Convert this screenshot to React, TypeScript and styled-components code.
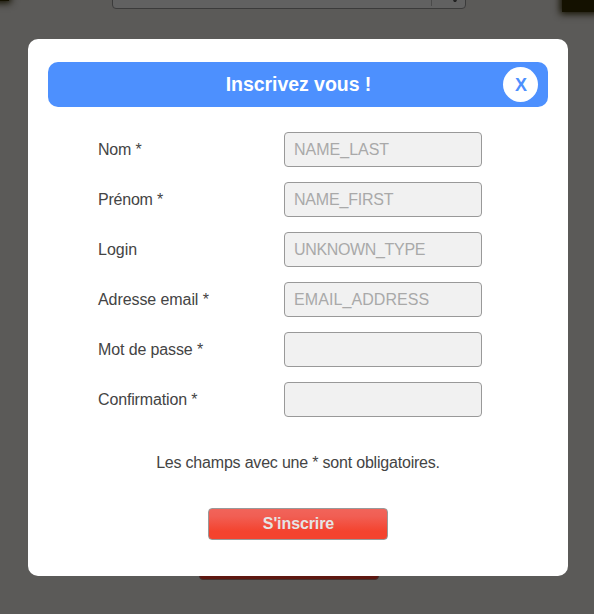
import React from "react";
import styled, { createGlobalStyle } from "styled-components";

const GlobalStyle = createGlobalStyle`
  * { box-sizing: border-box; }
  html, body { margin: 0; padding: 0; overflow: hidden; }
  body, input, button { font-family: "Liberation Sans", Arial, Helvetica, sans-serif; font-size: 16px; }
`;

const Page = styled.div`
  position: relative;
  display: flex;
  flex-direction: column;
  align-items: flex-start;
  width: 594px;
  height: 614px;
  padding: 39px 0 0 28px;
  overflow: hidden;
  background: #5b5a58;
`;

const Shadow = styled.div<{ $left: number; $bottom: number }>`
  position: absolute;
  top: -20px;
  left: ${(p) => p.$left}px;
  width: 60px;
  height: ${(p) => p.$bottom + 20}px;
  background: #141100;
  box-shadow: 0 0 7px 2px #141100;
`;

const BackSelect = styled.div`
  position: absolute;
  top: -24px;
  left: 112px;
  width: 354px;
  height: 33px;
  border: 1px solid #3b3b3b;
  border-radius: 4px;
  background: #616161;
  display: flex;
  justify-content: flex-end;
`;

const BackArrow = styled.div`
  width: 34px;
  height: 29px;
  border-left: 1px solid #4a4a4a;
  display: flex;
  align-items: flex-end;
  justify-content: center;
  padding: 0 0 4px 12px;
`;

const BackButton = styled.div`
  position: absolute;
  top: 549px;
  left: 199px;
  width: 180px;
  height: 31px;
  border: 1px solid #44302d;
  border-radius: 4px;
  background: #5e1811;
`;

const Dialog = styled.section`
  position: relative;
  width: 540px;
  height: 537px;
  padding: 23px 20px 0;
  border-radius: 10px;
  background: #fff;
  color: #444;
`;

const Header = styled.header`
  display: grid;
  grid-template-columns: 45px 1fr 35px;
  align-items: center;
  height: 45px;
  padding-right: 10px;
  border-radius: 10px;
  background: #4d90fe;
`;

const Title = styled.h1`
  grid-column: 2;
  margin: 0;
  padding-left: 1px;
  font-size: 19.5px;
  line-height: 23px;
  letter-spacing: -0.05px;
  text-align: center;
  color: #fff;
`;

const Close = styled.button`
  width: 35px;
  height: 35px;
  padding: 1px 0 0 1px;
  border: 0;
  border-radius: 50%;
  background: #fff;
  color: #4d90fe;
  font-size: 18px;
  font-weight: bold;
`;

const Form = styled.form`
  display: flex;
  flex-direction: column;
`;

const Fields = styled.div`
  display: grid;
  gap: 15px;
  padding: 25px 0 0 50px;
`;

const Field = styled.label`
  display: grid;
  grid-template-columns: 186px 198px;
  align-items: center;
  height: 35px;
`;

const Caption = styled.span<{ $tracking: number }>`
  letter-spacing: ${(p) => p.$tracking}px;
`;

const Input = styled.input<{ $tracking: number }>`
  width: 198px;
  height: 35px;
  padding: 0 9px;
  border: 1px solid #999;
  border-radius: 4px;
  background: #f1f1f1;
  color: #444;
  letter-spacing: ${(p) => p.$tracking}px;
  &::placeholder { color: #a9a9a9; opacity: 1; }
`;

const Note = styled.p`
  margin: 37px 0 0;
  line-height: 18px;
  letter-spacing: -0.2px;
  text-align: center;
`;

const Submit = styled.button`
  align-self: center;
  width: 180px;
  height: 32px;
  margin: 36px 0 0;
  padding: 0 0 1px 1px;
  border: 1px solid #999;
  border-radius: 4px;
  background: linear-gradient(#f1645a 0%, #f15e53 25%, #f4432e 75%, #f4432e 100%);
  color: #e5e5e5;
  font-weight: bold;
  letter-spacing: -0.1px;
`;

const fields = [
  { label: "Nom *", tracking: -0.2, hint: "NAME_LAST", hintTracking: 0 },
  { label: "Prénom *", tracking: -0.22, hint: "NAME_FIRST", hintTracking: -0.2 },
  { label: "Login", tracking: 0, hint: "UNKNOWN_TYPE", hintTracking: -0.34 },
  { label: "Adresse email *", tracking: -0.08, hint: "EMAIL_ADDRESS", hintTracking: 0.08 },
  { label: "Mot de passe *", tracking: -0.12, type: "password" },
  { label: "Confirmation *", tracking: -0.15, type: "password" },
];

export default function App() {
  return (
    <>
      <GlobalStyle />
      <Page>
        <Shadow $left={-51} $bottom={1} />
        <Shadow $left={562} $bottom={12} />
        <BackSelect>
          <BackArrow>
            <svg width="6" height="4" viewBox="0 0 6 4">
              <path d="M0 0H6L4 4H2Z" fill="#222" />
            </svg>
          </BackArrow>
        </BackSelect>
        <BackButton />
        <Dialog role="dialog" aria-labelledby="title">
          <Header>
            <Title id="title">Inscrivez vous !</Title>
            <Close type="button">X</Close>
          </Header>
          <Form>
            <Fields>
              {fields.map((f) => (
                <Field key={f.label}>
                  <Caption $tracking={f.tracking}>{f.label}</Caption>
                  <Input
                    type={f.type ?? "text"}
                    placeholder={f.hint}
                    $tracking={f.hintTracking ?? 0}
                  />
                </Field>
              ))}
            </Fields>
            <Note>Les champs avec une * sont obligatoires.</Note>
            <Submit type="button">S'inscrire</Submit>
          </Form>
        </Dialog>
      </Page>
    </>
  );
}
